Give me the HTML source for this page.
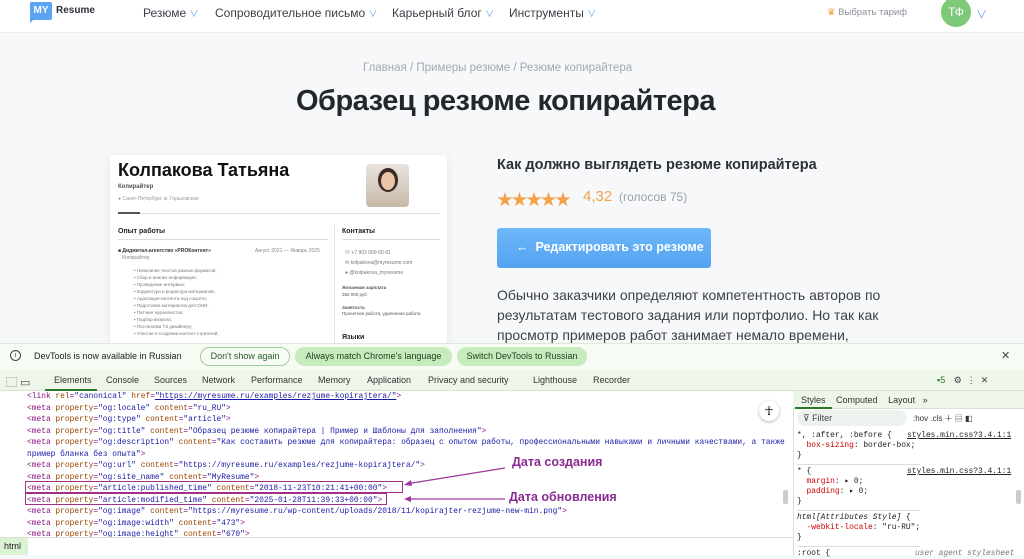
<!DOCTYPE html>
<html><head><meta charset="utf-8"><style>
*{margin:0;padding:0;box-sizing:border-box}
body{width:1024px;height:555px;overflow:hidden;background:#f7f8fa;font-family:"Liberation Sans","Noto Sans CJK SC",sans-serif;position:relative}
.a{position:absolute;white-space:nowrap}
.hdr{left:0;top:0;width:1024px;height:33px;background:#fff;border-bottom:1px solid #e8eaee}
.nav{font-size:12px;color:#3c4148;top:6px}
.chev{color:#5b9ef0;font-size:9px}
.mono{font-family:"Liberation Mono","DejaVu Sans Mono",monospace;font-size:7.9px;color:#881280}
.n{color:#994500}.v{color:#1a1aa6}
</style></head><body>
<div class="a hdr"></div>
<div class="a" style="left:30px;top:2px;width:22px;height:18px;background:#5aa4f2;border-radius:2px;color:#fff;font-weight:bold;font-size:10px;line-height:18px;text-align:center">MY</div>
<div class="a" style="left:30px;top:18px;width:0;height:0;border-left:5px solid #5aa4f2;border-bottom:5px solid transparent"></div>
<div class="a" style="left:56px;top:5px;font-size:10px;font-weight:bold;color:#2c3138">Resume</div>
<div class="a nav" style="left:143px">Резюме <span class="chev">∨</span></div>
<div class="a nav" style="left:215px">Сопроводительное письмо <span class="chev">∨</span></div>
<div class="a nav" style="left:392px">Карьерный блог <span class="chev">∨</span></div>
<div class="a nav" style="left:509px">Инструменты <span class="chev">∨</span></div>
<div class="a" style="left:827px;top:7px;font-size:9.5px;color:#8a9099"><span style="color:#f0a040">♛</span> Выбрать тариф</div>
<div class="a" style="left:941px;top:-3px;width:30px;height:30px;border-radius:50%;background:#7ec87a;color:#fff;font-size:12px;line-height:30px;text-align:center">ТФ</div>
<div class="a" style="left:976px;top:6px;font-size:11px;color:#5b9ef0">∨</div>

<div class="a" style="left:363px;top:62px;font-size:11.5px;color:#a2a8b0">Главная / Примеры резюме / Резюме копирайтера</div>
<div class="a" style="left:296px;top:85px;font-size:29px;font-weight:bold;color:#23272d;letter-spacing:-0.5px">Образец резюме копирайтера</div>

<div class="a" style="left:110px;top:155px;width:337px;height:190px;background:#fff;box-shadow:0 2px 10px rgba(0,0,0,.08);border-radius:3px"></div>
<div class="a" style="left:118px;top:160px;font-size:18px;font-weight:bold;color:#111">Колпакова Татьяна</div>
<div class="a" style="left:118px;top:184px;font-size:6px;font-weight:bold;color:#555">Копирайтер</div>
<div class="a" style="left:118px;top:196px;font-size:5px;color:#999">● Санкт-Петербург, м. Горьковская</div>
<div class="a" style="left:366px;top:164px;width:43px;height:43px;border-radius:4px;background:linear-gradient(#e8e4e0,#c8b8a8)"></div>
<div class="a" style="left:378px;top:168px;width:20px;height:24px;border-radius:50%;background:#3a2a22"></div>
<div class="a" style="left:381px;top:172px;width:14px;height:18px;border-radius:50%;background:#e8c4a8"></div>
<div class="a" style="left:118px;top:213px;width:322px;height:1px;background:#ddd"></div>
<div class="a" style="left:118px;top:212px;width:22px;height:2px;background:#555"></div>
<div class="a" style="left:118px;top:228px;font-size:7px;font-weight:bold;color:#222">Опыт работы</div>
<div class="a" style="left:118px;top:239px;width:210px;height:1px;background:#ddd"></div>
<div class="a" style="left:334px;top:224px;width:1px;height:121px;background:#e6e6e6"></div>
<div class="a" style="left:342px;top:228px;font-size:7px;font-weight:bold;color:#222">Контакты</div>
<div class="a" style="left:342px;top:239px;width:98px;height:1px;background:#ddd"></div>
<div class="a" style="left:118px;top:248px;font-size:5px;color:#333;line-height:7px">■ <b>Диджитал-агентство «PROКонтент»</b><span style="margin-left:44px;color:#888">Август 2021 — Январь 2025</span><br>&nbsp;&nbsp;&nbsp;<span style="color:#888">Копирайтер</span></div>
<div class="a" style="left:134px;top:267px;font-size:4.5px;color:#777;line-height:7px">• Написание текстов разных форматов;<br>• Сбор и анализ информации;<br>• Проведение интервью;<br>• Корректура и редактура материалов;<br>• Адаптация контента под соцсети;<br>• Подготовка материалов для СМИ;<br>• Питчинг журналистов;<br>• Подбор визуала;<br>• Постановка ТЗ дизайнеру;<br>• Участие в создании контент-стратегий;</div>
<div class="a" style="left:345px;top:248px;font-size:5px;color:#777;line-height:10px">☏ +7 903 000-00-01<br>✉ kolpakova@myresume.com<br>● @kolpakova_myresume</div>
<div class="a" style="left:342px;top:285px;font-size:4.5px;color:#555;line-height:6.5px"><b>Желаемая зарплата</b><br>350 000 руб<br><br><b>Занятость</b><br>Проектная работа, удаленная работа</div>
<div class="a" style="left:342px;top:334px;font-size:7px;font-weight:bold;color:#222">Языки</div>

<div class="a" style="left:497px;top:157px;font-size:14.5px;font-weight:bold;color:#2c3138">Как должно выглядеть резюме копирайтера</div>
<div class="a" style="left:497px;top:186px;font-size:16px;color:#f4a24a;letter-spacing:-1.5px">★★★★★</div>
<div class="a" style="left:583px;top:188px;font-size:15px;color:#f4a24a">4,32</div>
<div class="a" style="left:619px;top:190px;font-size:12px;color:#9aa0a8">(голосов 75)</div>
<div class="a" style="left:497px;top:228px;width:214px;height:40px;border-radius:3px;background:linear-gradient(#6cb8f8,#55a2f2)"></div>
<div class="a" style="left:516px;top:240px;font-size:12.5px;font-weight:bold;color:#fff">←&nbsp; Редактировать это резюме</div>
<div class="a" style="left:497px;top:285px;font-size:14px;color:#3c4148;line-height:20px">Обычно заказчики определяют компетентность авторов по<br>результатам тестового задания или портфолио. Но так как<br>просмотр примеров работ занимает немало времени,</div>

<div class="a" style="left:0;top:343px;width:1024px;height:27px;background:#f6fbf3;border-top:1px solid #dfe8da"></div>
<div class="a" style="left:10px;top:350px;width:11px;height:11px;border:1px solid #444;border-radius:50%;font-size:7px;text-align:center;line-height:9px;color:#444">i</div>
<div class="a" style="left:34px;top:351px;font-size:9px;color:#222">DevTools is now available in Russian</div>
<div class="a" style="left:200px;top:347px;width:90px;height:19px;border:1px solid #9fce98;border-radius:10px;font-size:9px;color:#2a5a2a;text-align:center;line-height:17px">Don't show again</div>
<div class="a" style="left:295px;top:347px;width:157px;height:19px;background:#c6ebbd;border-radius:10px;font-size:9px;color:#1e3d1e;text-align:center;line-height:19px">Always match Chrome's language</div>
<div class="a" style="left:457px;top:347px;width:130px;height:19px;background:#c6ebbd;border-radius:10px;font-size:9px;color:#1e3d1e;text-align:center;line-height:19px">Switch DevTools to Russian</div>
<div class="a" style="left:1001px;top:349px;font-size:11px;color:#444">✕</div>
<div class="a" style="left:0;top:370px;width:1024px;height:21px;background:#eef6ea;border-bottom:1px solid #d8e2d4"></div>
<div class="a" style="left:6px;top:374px;font-size:11px;color:#444">⬚ ▭</div>
<div class="a" style="left:45px;top:370px;width:52px;height:21px;border-bottom:2px solid #2a7a2a"></div>
<div class="a" style="left:0;top:375px;font-size:9px;color:#333"><span style="position:absolute;left:54px">Elements</span><span style="position:absolute;left:106px">Console</span><span style="position:absolute;left:154px">Sources</span><span style="position:absolute;left:202px">Network</span><span style="position:absolute;left:251px">Performance</span><span style="position:absolute;left:318px">Memory</span><span style="position:absolute;left:367px">Application</span><span style="position:absolute;left:428px">Privacy and security</span><span style="position:absolute;left:533px">Lighthouse</span><span style="position:absolute;left:593px">Recorder</span></div>
<div class="a" style="left:937px;top:375px;font-size:9px;color:#2a7a2a">▪5 <span style="color:#444;margin-left:6px">⚙ &nbsp;⋮ &nbsp;✕</span></div>
<div class="a" style="left:0;top:391px;width:793px;height:146px;background:#fff"></div>
<div class="a" style="left:793px;top:391px;width:231px;height:164px;background:#fff;border-left:1px solid #d8e2d4"></div>
<div class="a mono" style="left:27px;top:391px;line-height:11.5px">
&lt;link <span class="n">rel</span>=<span class="v">"canonical"</span> <span class="n">href</span>=<span class="v" style="text-decoration:underline">"https://myresume.ru/examples/rezjume-kopirajtera/"</span>&gt;<br>
&lt;meta <span class="n">property</span>=<span class="v">"og:locale"</span> <span class="n">content</span>=<span class="v">"ru_RU"</span>&gt;<br>
&lt;meta <span class="n">property</span>=<span class="v">"og:type"</span> <span class="n">content</span>=<span class="v">"article"</span>&gt;<br>
&lt;meta <span class="n">property</span>=<span class="v">"og:title"</span> <span class="n">content</span>=<span class="v">"Образец резюме копирайтера | Пример и Шаблоны для заполнения"</span>&gt;<br>
&lt;meta <span class="n">property</span>=<span class="v">"og:description"</span> <span class="n">content</span>=<span class="v">"Как составить резюме для копирайтера: образец с опытом работы, профессиональными навыками и личными качествами, а также</span><br><span class="v">пример бланка без опыта"</span>&gt;<br>
&lt;meta <span class="n">property</span>=<span class="v">"og:url"</span> <span class="n">content</span>=<span class="v">"https://myresume.ru/examples/rezjume-kopirajtera/"</span>&gt;<br>
&lt;meta <span class="n">property</span>=<span class="v">"og:site_name"</span> <span class="n">content</span>=<span class="v">"MyResume"</span>&gt;<br>
&lt;meta <span class="n">property</span>=<span class="v">"article:published_time"</span> <span class="n">content</span>=<span class="v">"2018-11-23T10:21:41+00:00"</span>&gt;<br>
&lt;meta <span class="n">property</span>=<span class="v">"article:modified_time"</span> <span class="n">content</span>=<span class="v">"2025-01-28T11:39:33+00:00"</span>&gt;<br>
&lt;meta <span class="n">property</span>=<span class="v">"og:image"</span> <span class="n">content</span>=<span class="v">"https://myresume.ru/wp-content/uploads/2018/11/kopirajter-rezjume-new-min.png"</span>&gt;<br>
&lt;meta <span class="n">property</span>=<span class="v">"og:image:width"</span> <span class="n">content</span>=<span class="v">"473"</span>&gt;<br>
&lt;meta <span class="n">property</span>=<span class="v">"og:image:height"</span> <span class="n">content</span>=<span class="v">"670"</span>&gt;</div>
<div class="a" style="left:25px;top:481px;width:378px;height:12px;border:1px solid #a0308a"></div>
<div class="a" style="left:25px;top:493px;width:362px;height:12px;border:1px solid #a0308a"></div>
<svg class="a" style="left:400px;top:460px" width="120" height="45"><line x1="6" y1="24" x2="105" y2="8" stroke="#9a3aa0" stroke-width="1.3"/><polygon points="4,25 11,20 12,26" fill="#9a3aa0"/><line x1="8" y1="39" x2="105" y2="39" stroke="#9a3aa0" stroke-width="1.3"/><polygon points="4,39 11,36 11,42" fill="#9a3aa0"/></svg>
<div class="a" style="left:512px;top:455px;font-size:12.5px;font-weight:bold;color:#8a2a90">Дата создания</div>
<div class="a" style="left:509px;top:490px;font-size:12.5px;font-weight:bold;color:#8a2a90">Дата обновления</div>
<div class="a" style="left:759px;top:401px;width:20px;height:20px;border-radius:50%;background:#fff;box-shadow:0 1px 3px rgba(0,0,0,.3);font-size:12px;text-align:center;line-height:20px">☥</div>
<div class="a" style="left:0;top:537px;width:793px;height:18px;background:#fff;border-top:1px solid #d8e2d4"></div>
<div class="a" style="left:0;top:538px;width:28px;height:17px;background:#dcf2d4;font-size:9px;color:#222;line-height:17px;padding-left:4px">html</div>
<div class="a" style="left:1016px;top:490px;width:5px;height:14px;background:#ccc;border-radius:2px"></div>
<div class="a" style="left:783px;top:490px;width:5px;height:14px;background:#ccc;border-radius:2px"></div>
<div class="a" style="left:793px;top:391px;width:231px;height:18px;background:#eef6ea;border-bottom:1px solid #d8e2d4"></div>
<div class="a" style="left:795px;top:391px;width:37px;height:18px;border-bottom:2px solid #2a7a2a"></div>
<div class="a" style="left:801px;top:395px;font-size:9px;color:#333">Styles <span style="margin-left:8px">Computed</span> <span style="margin-left:8px">Layout</span> <span style="margin-left:5px">»</span></div>
<div class="a" style="left:797px;top:410px;width:110px;height:16px;background:#eef2ee;border-radius:8px;font-size:9px;color:#444;line-height:16px;padding-left:6px">⊽ Filter</div>
<div class="a" style="left:913px;top:413px;font-size:8px;color:#333">:hov .cls ＋ ▤ ◧</div>
<div class="a mono" style="left:797px;top:431px;line-height:10px;color:#222;font-size:7.9px">*, :after, :before {<span style="position:absolute;left:110px;text-decoration:underline">styles.min.css?3.4.1:1</span><br>&nbsp;&nbsp;<span style="color:#c80000">box-sizing</span>: border-box;<br>}<br><span style="display:block;border-top:1px solid #ddd;margin-top:3px;padding-top:2px">* {<span style="position:absolute;left:110px;text-decoration:underline">styles.min.css?3.4.1:1</span></span>&nbsp;&nbsp;<span style="color:#c80000">margin</span>: ▸ 0;<br>&nbsp;&nbsp;<span style="color:#c80000">padding</span>: ▸ 0;<br>}<br><span style="display:block;border-top:1px solid #ddd;margin-top:3px;padding-top:2px"><i>html[Attributes Style]</i> {</span>&nbsp;&nbsp;<span style="color:#c80000">-webkit-locale</span>: "ru-RU";<br>}<br><span style="display:block;border-top:1px solid #ddd;margin-top:3px;padding-top:2px">:root {<span style="position:absolute;left:118px;color:#777;font-style:italic">user agent stylesheet</span></span></div>
</body></html>
